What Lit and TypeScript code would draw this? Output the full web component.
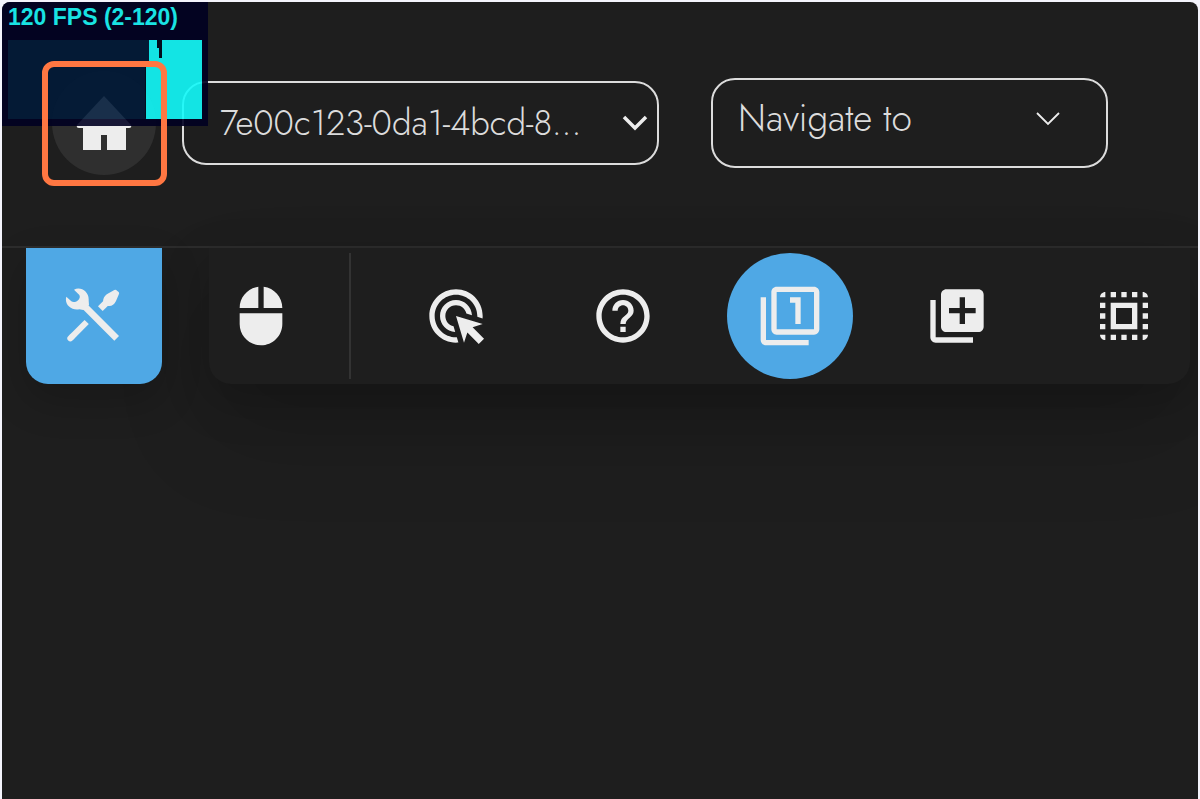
import { LitElement, html, css, svg } from "lit";
import { customElement, property, state } from "lit/decorators.js";
import { classMap } from "lit/directives/class-map.js";

const icons: Record<string, string> = {
  mouse:
    "M13 1.07V9h7c0-4.08-3.05-7.44-7-7.93zM4 15c0 4.42 3.58 8 8 8s8-3.58 8-8v-4H4v4zm7-13.93C7.05 1.56 4 4.92 4 9h7V1.07z",
  click:
    "M11.71 17.99C8.53 17.84 6 15.22 6 12c0-3.31 2.69-6 6-6 3.22 0 5.84 2.53 5.99 5.71l-2.1-.63C15.48 9.31 13.89 8 12 8c-2.21 0-4 1.79-4 4 0 1.89 1.31 3.48 3.08 3.89l.63 2.1zM22 12c0 .3-.01.6-.04.9l-1.97-.59c.01-.1.01-.21.01-.31 0-4.42-3.58-8-8-8s-8 3.58-8 8 3.58 8 8 8c.1 0 .21 0 .31-.01l.59 1.97c-.3.03-.6.04-.9.04-5.52 0-10-4.48-10-10S6.48 2 12 2s10 4.48 10 10zm-3.77 4.26L22 15l-10-3 3 10 1.26-3.77 4.27 4.27 1.98-1.98-4.28-4.26z",
  help:
    "M11 18h2v-2h-2v2zm1-16C6.48 2 2 6.48 2 12s4.48 10 10 10 10-4.48 10-10S17.52 2 12 2zm0 18c-4.41 0-8-3.59-8-8s3.59-8 8-8 8 3.59 8 8-3.59 8-8 8zm0-14c-2.21 0-4 1.79-4 4h2c0-1.1.9-2 2-2s2 .9 2 2c0 2-3 1.75-3 5h2c0-2.25 3-2.5 3-5 0-2.21-1.79-4-4-4z",
  single:
    "M3 5H1v16c0 1.1.9 2 2 2h16v-2H3V5zm11 10h2V5h-4v2h2v8zm7-14H7c-1.1 0-2 .9-2 2v14c0 1.1.9 2 2 2h14c1.1 0 2-.9 2-2V3c0-1.1-.9-2-2-2zm0 16H7V3h14v14z",
  add:
    "M4 6H2v14c0 1.1.9 2 2 2h14v-2H4V6zm16-4H8c-1.1 0-2 .9-2 2v12c0 1.1.9 2 2 2h12c1.1 0 2-.9 2-2V4c0-1.1-.9-2-2-2zm-1 9h-4v4h-2v-4H9V9h4V5h2v4h4v2z",
  all:
    "M3 5h2V3c-1.1 0-2 .9-2 2zm0 8h2v-2H3v2zm4 8h2v-2H7v2zM3 9h2V7H3v2zm10-6h-2v2h2V3zm6 0v2h2c0-1.1-.9-2-2-2zM5 21v-2H3c0 1.1.9 2 2 2zm-2-4h2v-2H3v2zM9 3H7v2h2V3zm2 18h2v-2h-2v2zm8-8h2v-2h-2v2zm0 8c1.1 0 2-.9 2-2h-2v2zm0-12h2V7h-2v2zm0 8h2v-2h-2v2zm-4 4h2v-2h-2v2zm0-16h2V3h-2v2zM7 17h10V7H7v10zm2-8h6v6H9V9z",
};

@customElement("tool-icon")
export class ToolIcon extends LitElement {
  static styles = css`
    :host {
      display: block;
      width: 64px;
      height: 64px;
    }
    .glyph {
      display: block;
      width: 100%;
      height: 100%;
      fill: currentColor;
    }
  `;

  @property() name = "";

  render() {
    return html`<svg class="glyph" viewBox="0 0 24 24" aria-hidden="true">
      ${svg`<path d=${icons[this.name] ?? ""}></path>`}
    </svg>`;
  }
}

@customElement("fps-meter")
export class FpsMeter extends LitElement {
  static styles = css`
    :host {
      display: block;
      box-sizing: border-box;
      width: 206px;
      padding: 3px 6px 7px;
      background: #000022;
      opacity: 0.9;
      pointer-events: none;
    }
    .label {
      color: #19f9f9;
      font: bold 23px/24px "Liberation Sans", Arial, sans-serif;
      white-space: nowrap;
    }
    .graph {
      display: block;
      width: 194px;
      height: 80px;
      margin-top: 10px;
    }
  `;

  render() {
    return html`
      <div class="label">120 FPS (2-120)</div>
      <svg class="graph" viewBox="0 0 194 80" aria-hidden="true">
        <rect y="1" width="194" height="79" fill="#021a38"></rect>
        <path d="M138 80V26H141V1H149V9H151V19H154V1H194V80Z" fill="#12fafa"></path>
        <path d="M137 26h1v53h-1zM149 1h5v18h-3v-10h-2z" fill="#000c1c"></path>
      </svg>
    `;
  }
}

@customElement("app-root")
export class AppRoot extends LitElement {
  static styles = css`
    :host {
      display: block;
      box-sizing: border-box;
      min-height: 100vh;
      padding: 2px 2px 0;
      background: #f4f4fc;
      color: #ededed;
      font-family: Jost, Lato, "Open Sans", sans-serif;
    }
    .app {
      position: relative;
      box-sizing: border-box;
      min-height: calc(100vh - 2px);
      overflow: hidden;
      border-radius: 8px 8px 0 0;
      background: #1e1e1e;
    }
    .header {
      display: flex;
      align-items: center;
      box-sizing: border-box;
      height: 246px;
      padding: 0 90px 2px 50px;
      border-bottom: 2px solid #2d2d2d;
    }
    .home {
      display: grid;
      place-items: center;
      flex: none;
      width: 104px;
      height: 104px;
      border-radius: 50%;
      background: #2f2f2f;
      color: #ededed;
    }
    .home-glyph {
      width: 56px;
      height: 56px;
      fill: currentColor;
    }
    .field {
      display: grid;
      align-items: center;
    }
    .session {
      flex: 477 1 0;
      margin-left: 26px;
    }
    .navigate {
      flex: 397 1 0;
      margin-left: 52px;
    }
    .select,
    .chevron {
      grid-area: 1 / 1;
    }
    .select {
      appearance: none;
      box-sizing: border-box;
      width: 100%;
      height: 84px;
      margin: 0;
      padding: 0 64px 0 36px;
      border: 2px solid #dcdcdc;
      border-radius: 24px;
      background: transparent;
      color: #dcdcdc;
      font: 350 35px/48px Jost, Lato, "Open Sans", sans-serif;
      text-overflow: ellipsis;
    }
    .navigate .select {
      height: 90px;
      padding: 0 72px 10px 25px;
      font-size: 37px;
    }
    .chevron {
      justify-self: end;
      width: 26px;
      height: 16px;
      margin-right: 11px;
      fill: none;
      stroke: #ededed;
      stroke-width: 3.5;
      pointer-events: none;
    }
    .navigate .chevron {
      margin: 0 47px 8px 0;
      stroke-width: 1.8;
    }
    .toolbar {
      display: flex;
      gap: 47px;
      padding: 0 8px 0 24px;
    }
    .button {
      display: grid;
      place-items: center;
      margin: 0;
      padding: 0;
      border: 0;
      background: transparent;
      color: #ededed;
    }
    .tools {
      z-index: 1;
      flex: none;
      width: 136px;
      height: 136px;
      border-radius: 0 0 22px 22px;
      background: #4fa8e5;
      box-shadow: 0 16px 40px rgba(0, 0, 0, 0.2);
    }
    .tools-glyph {
      width: 58px;
      height: 58px;
    }
    .panel {
      display: flex;
      flex: 1;
      align-items: center;
      box-sizing: border-box;
      height: 136px;
      padding-right: 3px;
      border-radius: 0 0 22px 22px;
      background: #1e1e1e;
      box-shadow: 0 16px 48px rgba(0, 0, 0, 0.2), 0 48px 96px rgba(0, 0, 0, 0.15);
    }
    .pointer {
      width: 104px;
      height: 126px;
    }
    .modes {
      display: flex;
      flex: 1;
      justify-content: space-between;
      margin-left: 36px;
      padding-left: 42px;
      border-left: 2px solid #333333;
    }
    .mode {
      width: 126px;
      height: 126px;
      border-radius: 50%;
    }
    .active {
      background: #4fa8e5;
    }
    .meter {
      position: absolute;
      top: 0;
      left: 0;
    }
    .highlight {
      position: absolute;
      top: 59px;
      left: 40px;
      box-sizing: border-box;
      width: 125px;
      height: 125px;
      border: 6px solid #ff7742;
      border-radius: 12px;
      pointer-events: none;
    }
  `;

  @state() private mode = "single";

  private modes = [
    { id: "click", label: "Click" },
    { id: "help", label: "Help" },
    { id: "single", label: "Select one" },
    { id: "add", label: "Add to selection" },
    { id: "all", label: "Select all" },
  ];

  render() {
    return html`
      <main class="app">
        <header class="header">
          <a class="home" href="#" aria-label="Home">
            <svg class="home-glyph" viewBox="0 0 56 56" aria-hidden="true">
              <path d="M28 1 55 30Q56 33 53 33H50V55H31V40H25V55H7V33H3Q0 33 1 30Z"></path>
            </svg>
          </a>
          <div class="field session">
            <select class="select" aria-label="Session">
              <option>7e00c123-0da1-4bcd-8...</option>
            </select>
            <svg class="chevron" viewBox="0 0 26 16" aria-hidden="true">
              <path d="M2 2 13 13 24 2"></path>
            </svg>
          </div>
          <div class="field navigate">
            <select class="select" aria-label="Navigate">
              <option>Navigate to</option>
            </select>
            <svg class="chevron" viewBox="0 0 26 16" aria-hidden="true">
              <path d="M2 2 13 13 24 2"></path>
            </svg>
          </div>
        </header>
        <nav class="toolbar">
          <button class="button tools" aria-label="Tools">
            <svg class="tools-glyph" viewBox="5 6 174 174" aria-hidden="true">
              <g fill="none" stroke="#ededed" stroke-width="20">
                <path d="M56 56 160 160"></path>
                <path d="M70 111 24 157" stroke-width="18"></path>
                <path d="M24 157 21 160" stroke-width="18" stroke-linecap="round"></path>
                <path d="M111 71 130 52"></path>
              </g>
              <path
                fill="#ededed"
                d="M32 14C52 3 78 20 76 46L77 60 60 75 48 73C24 78 2 58 9 35L24 49C34 57 55 43 48 30Z"
              ></path>
              <path
                fill="#ededed"
                d="M120 51C118 42 123 32 133 26L153 15Q158 13 161 17L166 21Q169 24 166 29L158 48C152 60 142 66 132 62Z"
              ></path>
            </svg>
          </button>
          <div class="panel">
            <button class="button pointer" aria-label="Mouse">
              <tool-icon name="mouse"></tool-icon>
            </button>
            <div class="modes">
              ${this.modes.map(
                (m) => html`<button
                  class=${classMap({ button: true, mode: true, active: m.id === this.mode })}
                  aria-label=${m.label}
                  @click=${() => (this.mode = m.id)}
                >
                  <tool-icon name=${m.id}></tool-icon>
                </button>`
              )}
            </div>
          </div>
        </nav>
        <fps-meter class="meter"></fps-meter>
        <div class="highlight"></div>
      </main>
    `;
  }
}
